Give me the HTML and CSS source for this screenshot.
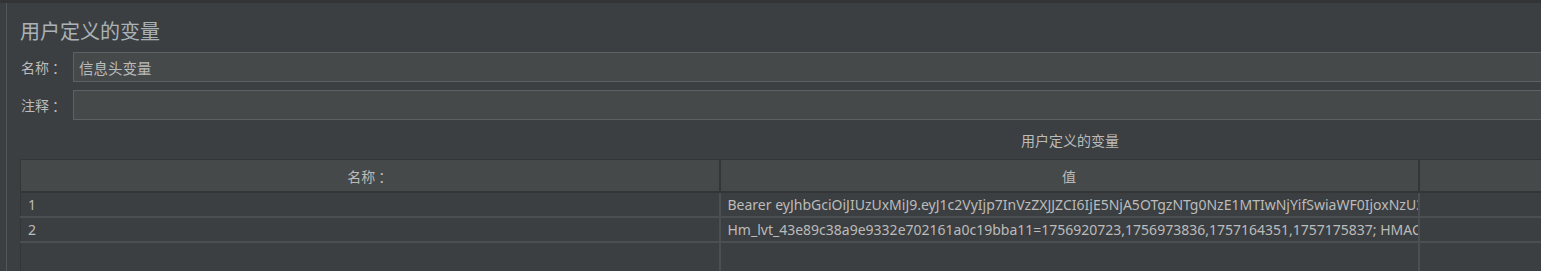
FILE: index.html
```html
<!DOCTYPE html>
<html lang="zh-CN">
<head>
    <meta charset="UTF-8">
    <title>用户定义的变量</title>
    <link rel="stylesheet" href="styles.css">
</head>
<body>
    <div class="top-strip"></div>
    <div class="panel">
        <h2 class="title">用户定义的变量</h2>
        <div class="field-row">
            <label class="field-label">名称<span class="colon">：</span></label>
            <input class="field-input" type="text" value="信息头变量">
        </div>
        <div class="field-row">
            <label class="field-label">注释<span class="colon">：</span></label>
            <input class="field-input" type="text" value="">
        </div>
        <div class="table-caption">用户定义的变量</div>
        <table class="var-table">
            <colgroup>
                <col class="col">
                <col class="col">
                <col class="col">
            </colgroup>
            <thead>
                <tr>
                    <th>名称<span class="colon">：</span></th>
                    <th>值</th>
                    <th></th>
                </tr>
            </thead>
            <tbody>
                <tr>
                    <td>1</td>
                    <td>Bearer eyJhbGciOiJIUzUxMiJ9.eyJ1c2VyIjp7InVzZXJJZCI6IjE5NjA5OTgzNTg0NzE1MTIwNjYifSwiaWF0IjoxNzU3MTc1ODM3fQ</td>
                    <td></td>
                </tr>
                <tr>
                    <td>2</td>
                    <td>Hm_lvt_43e89c38a9e9332e702161a0c19bba11=1756920723,1756973836,1757164351,1757175837; HMACCOUNT=8F1A2B3C4D5E6F70</td>
                    <td></td>
                </tr>
                <tr class="empty-row">
                    <td></td>
                    <td></td>
                    <td></td>
                </tr>
            </tbody>
        </table>
    </div>
</body>
</html>
```

FILE: styles.css
```css
html, body {
    margin: 0;
    height: 100%;
}
body {
    background-color: #3c3f41;
    color: #bbbbbb;
    font-family: "Noto Sans", "Noto Sans CJK SC", sans-serif;
    font-size: 14px;
    overflow: hidden;
}
.top-strip {
    height: 3px;
    background-color: #323436;
}
.panel {
    margin-left: 6px;
    border-left: 1px solid #53575a;
    padding: 0 0 0 13px;
    width: 2110px;
    height: 268px;
}
.title {
    margin: 0;
    padding-top: 15px;
    height: 34px;
    font-family: "Noto Sans CJK SC", sans-serif;
    font-size: 20px;
    font-weight: normal;
    line-height: 26px;
    color: #aab2b8;
}
.colon {
    padding-left: 3px;
    font-family: "Noto Sans CJK TC", sans-serif;
}
.field-row {
    display: flex;
    align-items: center;
    margin-bottom: 8px;
}
.field-label {
    width: 53px;
    padding-left: 1px;
    box-sizing: border-box;
    font-family: "Noto Sans CJK SC", sans-serif;
    font-size: 14px;
}
.field-input {
    flex: 1;
    height: 30px;
    box-sizing: border-box;
    margin: 0;
    padding: 0 5px;
    background-color: #45494a;
    border: 1px solid #5e6163;
    color: #bbbbbb;
    font-family: "Noto Sans CJK SC", sans-serif;
    font-size: 14.5px;
    outline: none;
}
.table-caption {
    width: 2100px;
    text-align: center;
    font-family: "Noto Sans CJK SC", sans-serif;
    font-size: 14px;
    line-height: 20px;
    margin-top: 10px;
    height: 29px;
}
.var-table {
    width: 2097px;
    table-layout: fixed;
    border-collapse: collapse;
    border-left: 1px solid #333537;
    border-top: 1px solid #333537;
}
.col {
    width: 699px;
}
.var-table th {
    height: 31px;
    padding: 0;
    background-color: #45494a;
    border-right: 2px solid #333537;
    border-bottom: 2px solid #333537;
    font-family: "Noto Sans CJK SC", sans-serif;
    font-size: 14px;
    font-weight: normal;
    text-align: center;
}
.var-table td {
    height: 23px;
    padding: 0 7px;
    border-right: 2px solid #4b4f51;
    border-bottom: 2px solid #4b4f51;
    white-space: nowrap;
    overflow: hidden;
    font-size: 14px;
}
.var-table .empty-row td {
    height: 40px;
    border-bottom: none;
}
```
